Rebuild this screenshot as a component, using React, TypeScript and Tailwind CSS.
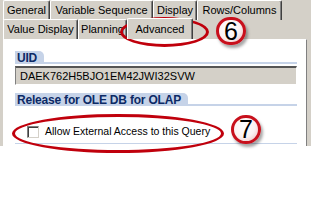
import React from 'react'

const font = { fontFamily: '"Liberation Sans", Arial, sans-serif' }

function Tab({ label, w, selected = false }: { label: string; w: string; selected?: boolean }) {
  return (
    <div
      className={`${w} ${selected ? 'h-[21px] -mt-[2px] z-10' : 'h-[20px]'} flex items-center justify-center shrink-0 bg-[#d4d0c8] border-l border-t border-white border-r border-r-[#404040] rounded-t-[2px] shadow-[inset_-1px_0_0_#808080] text-[11px] text-black leading-none`}
    >
      {label}
    </div>
  )
}

function SectionHeader({ title }: { title: string }) {
  return (
    <div className="flex items-end h-[13px]">
      <div className="h-[13px] pl-[2px] pr-[7px] bg-[#c6d3e8] rounded-tr-[5px] flex items-center text-[12px] font-bold text-[#0c2a66] tracking-[-0.2px] leading-none">
        {title}
      </div>
      <div className="flex-1 border-b-2 border-[#c6d3e8]" />
    </div>
  )
}

function Callout({ n, className }: { n: string; className: string }) {
  return (
    <div
      className={`absolute flex items-center justify-center rounded-full border-[3px] border-[#c8101c] bg-[radial-gradient(circle_at_40%_35%,#ffffff_0%,#fbf1f1_55%,#eab8b8_100%)] shadow-[2px_3px_3px_rgba(0,0,0,0.35)] text-[25px] leading-none text-black ${className}`}
    >
      {n}
    </div>
  )
}

export default function App() {
  return (
    <div className="relative w-[311px] h-[200px] bg-white overflow-hidden" style={font}>
      {/* dialog */}
      <div className="h-[146px] bg-[#d4d0c8] flex flex-col">
        {/* tab row 1 */}
        <div className="flex pl-[3px]">
          <Tab label="General" w="w-[47px]" />
          <Tab label="Variable Sequence" w="w-[103px]" />
          <Tab label="Display" w="w-[44px]" />
          <Tab label="Rows/Columns" w="w-[85px]" />
        </div>
        {/* tab row 2 */}
        <div className="flex pl-[3px] h-[19px] items-end">
          <Tab label="Value Display" w="w-[75px]" />
          <Tab label="Planning" w="w-[49px]" />
          <Tab label="Advanced" w="w-[66px]" selected />
        </div>
        {/* panel */}
        <div className="flex-1 ml-[3px] mr-[4px] bg-white border-t border-white border-r border-r-[#808080] pt-[11px] pl-[12px] pr-[9px] flex flex-col">
          <SectionHeader title="UID" />
          <div className="mt-[2px] h-[19px] bg-[#d4d0c8] border-t-2 border-l border-t-[#555] border-l-[#808080] border-b border-r border-b-white border-r-white flex items-center pl-[4px] text-[11px] text-black leading-none">
            DAEK762H5BJO1EM42JWI32SVW
          </div>
          <div className="mt-[8px]">
            <SectionHeader title="Release for OLE DB for OLAP" />
          </div>
          <div className="mt-[19px] flex items-center pl-[12px] h-[13px]">
            <div className="w-[12px] h-[12px] bg-white border border-t-[#808080] border-l-[#808080] border-b-[#d4d0c8] border-r-[#d4d0c8] shadow-[inset_1px_1px_0_#404040]" />
            <span className="ml-[6px] text-[10.5px] text-black leading-none">Allow External Access to this Query</span>
          </div>
          <div className="mt-[5px] border-b border-[#c6d3e8]" />
        </div>
      </div>

      {/* annotations */}
      <div className="absolute left-[120px] top-[17px] w-[89px] h-[30px] rounded-[50%] border-[3px] border-[#c0000c]" />
      <Callout n="6" className="left-[216px] top-[17px] w-[30px] h-[28px]" />
      <div className="absolute left-[12px] top-[114px] w-[212px] h-[39px] rounded-[50%] border-[3px] border-[#c0000c]" />
      <Callout n="7" className="left-[231px] top-[115px] w-[30px] h-[29px]" />
    </div>
  )
}
